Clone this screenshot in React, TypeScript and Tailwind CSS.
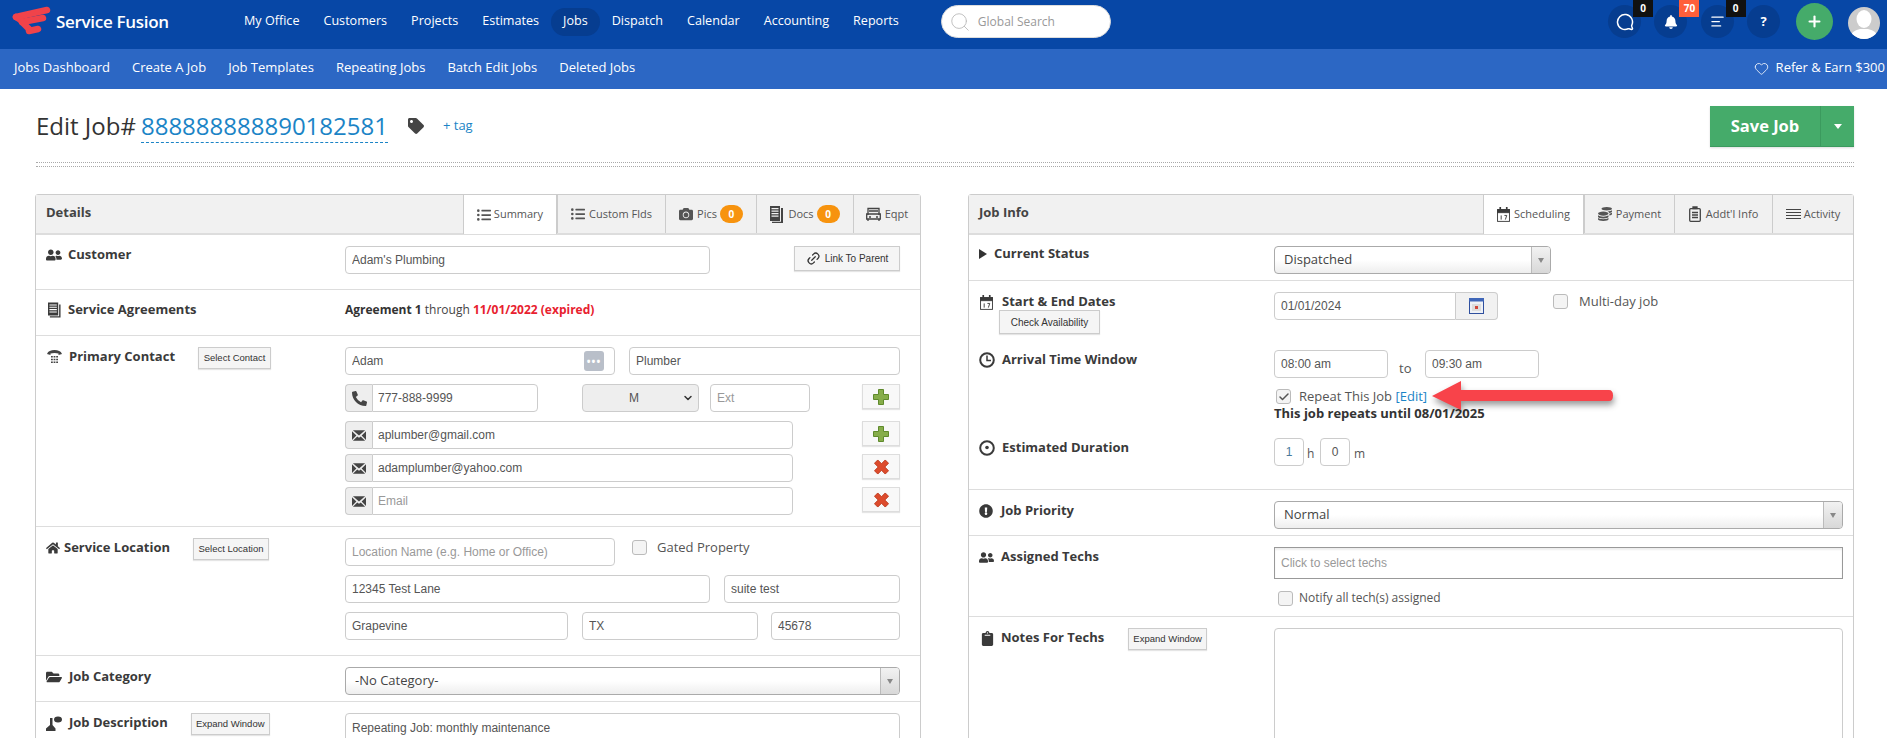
import React from 'react';
import { AlignLeft, Check, ChevronDown, Heart, Link2, MessageCircle, Plus, Search } from 'lucide-react';
import {
  FaBell,
  FaCamera,
  FaClipboard,
  FaCoins,
  FaExclamationCircle,
  FaFolderOpen,
  FaHome,
  FaListUl,
  FaPhoneAlt,
  FaTag,
  FaUserFriends,
} from 'react-icons/fa';

const navItems = ['My Office', 'Customers', 'Projects', 'Estimates', 'Jobs', 'Dispatch', 'Calendar', 'Accounting', 'Reports'];
const subNavItems = ['Jobs Dashboard', 'Create A Job', 'Job Templates', 'Repeating Jobs', 'Batch Edit Jobs', 'Deleted Jobs'];

const Logo = () => (
  <svg viewBox="0 0 40 32" className="w-[40px] h-[32px] shrink-0" fill="none" stroke="#f0434a" strokeWidth="6.5" strokeLinecap="round" strokeLinejoin="round">
    <path d="M4 11 L35 4" />
    <path d="M4 11 L12 16" />
    <path d="M10 16 L31 12" />
    <path d="M10 16 L18 24" />
    <path d="M17 25 L26 23" />
  </svg>
);

const EnvelopeIcon = () => (
  <svg viewBox="0 0 16 12" className="w-[14px] h-[11px]" fill="#444">
    <path d="M1 0h14l-7 6z" />
    <path d="M0 1v10l5-5zM16 1v10l-5-5z" />
    <path d="M1 12l5-5 2 1.6L10 7l5 5z" />
  </svg>
);

const AgreementIcon = () => (
  <svg viewBox="0 0 14 16" className="w-[13px] h-[16px]" fill="#3a3a3a">
    <path d="M0 0h11v14H0zM1.5 2v1.2h8V2zm0 2.5v1.2h8V4.5zm0 2.5v1.2h8V7zm0 2.5v1.2h8V9.5z" fillRule="evenodd" />
    <path d="M12 2h1.5v14H2v-1.3h10z" />
  </svg>
);

const TelIcon = () => (
  <svg viewBox="0 0 15 14" className="w-[15px] h-[14px]" fill="#444">
    <path d="M0 4C1 1 4 0 7.5 0S14 1 15 4l-3.5 1V3.5c-2-.8-6-.8-8 0V5z" />
    <path d="M4 6h1.8v1.6H4zm2.6 0h1.8v1.6H6.6zm2.6 0H11v1.6H9.2zM4 8.7h1.8v1.6H4zm2.6 0h1.8v1.6H6.6zm2.6 0H11v1.6H9.2zM4 11.4h1.8V13H4zm2.6 0h1.8V13H6.6zm2.6 0H11V13H9.2z" />
  </svg>
);

const SpeakerIcon = () => (
  <svg viewBox="0 0 16 15" className="w-[16px] h-[15px]" fill="#3a3a3a">
    <ellipse cx="12" cy="3.5" rx="4" ry="3" />
    <path d="M4 2h2.5v7l3 3.5V15H0v-2.5L4 9z" />
  </svg>
);

const CalendarIcon = ({ className }: { className: string }) => (
  <svg viewBox="0 0 14 16" className={className} fill="none" stroke="#3a3a3a">
    <rect x="0.6" y="2.6" width="12.8" height="12.8" />
    <path d="M.6 3h12.8v3H.6z" fill="#3a3a3a" />
    <path d="M3.5 0v3M10.5 0v3" strokeWidth="1.8" />
    <path d="M4.5 9v4.5M8 9h2.5L9 13.5" strokeWidth="1" />
  </svg>
);

const DocsIcon = () => (
  <svg viewBox="0 0 13 17" className="w-[13px] h-[17px]" fill="#444">
    <path d="M0 0h10v15H0zM1.5 2v1.2h7V2zm0 2.5v1.2h7V4.5zm0 2.5v1.2h7V7zm0 2.5v1.2h7V9.5z" fillRule="evenodd" />
    <path d="M11 2h2v15H2v-1.3h9z" />
  </svg>
);

const EqptIcon = () => (
  <svg viewBox="0 0 15 14" className="w-[15px] h-[14px]" fill="none" stroke="#444" strokeWidth="1.3">
    <path d="M2 8V1.5h11V8" />
    <path d="M.7 7h13.6v5H.7z" />
    <path d="M3 4h9M3 10h2M10 10h2M2 12v2M13 12v2" />
  </svg>
);

const ActivityIcon = () => (
  <svg viewBox="0 0 15 10" className="w-[15px] h-[10px]" stroke="#444" strokeWidth="1">
    <path d="M0 .5h15M0 3.5h15M0 6.5h15M0 9.5h15" />
  </svg>
);

const AddlInfoIcon = () => (
  <svg viewBox="0 0 12 16" className="w-[12px] h-[16px]" fill="none" stroke="#444" strokeWidth="1.3">
    <rect x="0.7" y="2.7" width="10.6" height="12.6" rx="1" />
    <path d="M4 2.5h4V1H4z" fill="#444" />
    <path d="M3 6.5h6M3 9h6M3 11.5h6" />
  </svg>
);

const ClockIcon = ({ dot }: { dot?: boolean }) => (
  <svg viewBox="0 0 16 16" className="w-[16px] h-[16px]" fill="none" stroke="#3a3a3a" strokeWidth="2">
    <circle cx="8" cy="8" r="6.8" />
    {dot ? <circle cx="8" cy="7.5" r="1.8" fill="#3a3a3a" stroke="none" /> : <path d="M8 3.5V8.5H12" strokeWidth="1.5" />}
  </svg>
);

const GreenPlus = () => (
  <svg viewBox="0 0 16 16" className="w-[16px] h-[16px]">
    <path d="M5.5 .5h5v5h5v5h-5v5h-5v-5h-5v-5h5z" fill="#86ad4a" stroke="#5f8a2c" strokeLinejoin="round" />
  </svg>
);

const RedCross = () => (
  <svg viewBox="0 0 16 16" className="w-[15px] h-[16px]">
    <path d="M4 .5 8 4.5 12 .5 15.5 4 11.5 8 15.5 12 12 15.5 8 11.5 4 15.5 .5 12 4.5 8 .5 4z" fill="#dd4b2c" stroke="#bd3a1e" strokeLinejoin="round" />
  </svg>
);

const Label = ({ icon, iconClass, children }: { icon: React.ReactNode; iconClass: string; children: React.ReactNode }) => (
  <div className="flex items-center h-[18px] mt-[1px] text-[13px] font-bold text-[#3a3a3a] whitespace-nowrap">
    <span className={`flex items-center shrink-0 ${iconClass}`}>{icon}</span>
    {children}
  </div>
);

const SmallButton = ({ className, children }: { className: string; children: React.ReactNode }) => (
  <div className={`flex items-center justify-center bg-[#f5f5f5] border border-[#ccc] shadow-[0_1px_1px_#e5e5e5] font-['Liberation_Sans',Arial,sans-serif] text-[#333] whitespace-nowrap ${className}`}>
    {children}
  </div>
);

const TextInput = ({ value, placeholder, className }: { value?: string; placeholder?: string; className: string }) => (
  <input
    readOnly
    value={value ?? ''}
    placeholder={placeholder}
    className={`block h-[28px] px-[6px] bg-white border border-[#ccc] rounded-[4px] font-['Liberation_Sans',Arial,sans-serif] text-[12px] text-[#555] placeholder:text-[#999] outline-none ${className}`}
  />
);

const AddonInput = ({ icon, value, placeholder, className }: { icon: React.ReactNode; value?: string; placeholder?: string; className: string }) => (
  <div className={`flex h-[28px] ${className}`}>
    <span className="flex items-center justify-center w-[27px] shrink-0 bg-[#eee] border border-r-0 border-[#ccc] rounded-l-[4px]">{icon}</span>
    <input
      readOnly
      value={value ?? ''}
      placeholder={placeholder}
      className="flex-1 min-w-0 px-[5px] bg-white border border-[#ccc] rounded-r-[4px] font-['Liberation_Sans',Arial,sans-serif] text-[12px] text-[#555] placeholder:text-[#999] outline-none"
    />
  </div>
);

const Dropdown = ({ value, className }: { value: string; className: string }) => (
  <div className={`flex h-[28px] border border-[#aaa] rounded-[4px] bg-gradient-to-b from-white from-50% to-[#eee] overflow-hidden ${className}`}>
    <span className="flex-1 flex items-center pl-[9px] text-[13px] text-[#444]">{value}</span>
    <span className="flex items-center justify-center w-[19px] border-l border-[#bbb] bg-gradient-to-b from-[#f2f2f2] to-[#d8d8d8]">
      <span className="w-0 h-0 border-x-[3px] border-x-transparent border-t-[5px] border-t-[#888]" />
    </span>
  </div>
);

const CheckBox = ({ checked, className }: { checked?: boolean; className?: string }) => (
  <span className={`flex items-center justify-center w-[15px] h-[15px] shrink-0 rounded-[3px] border border-[#bbb] bg-[#f4f4f4] ${className ?? ''}`}>
    {checked && <Check size={12} strokeWidth={3} color="#555" />}
  </span>
);

const CountBadge = ({ value }: { value: string }) => (
  <span className="ml-[3px] flex items-center justify-center w-[23px] h-[18px] rounded-full bg-[#f7930e] text-white text-[10px] font-bold">{value}</span>
);

const Tab = ({ active, className, children }: { active?: boolean; className: string; children: React.ReactNode }) => (
  <div className={`flex items-center justify-center border-l border-[#ccc] text-[11px] text-[#555] whitespace-nowrap ${active ? 'bg-white h-[39px] border-r' : 'h-[38px]'} ${className}`}>
    {children}
  </div>
);

const CornerButton = ({ children }: { children: React.ReactNode }) => (
  <div className="flex items-center justify-center w-[38px] h-[25px] bg-[#f8f8f8] border border-[#ddd] shadow-[0_1px_1px_#e5e5e5]">{children}</div>
);

const HeaderCircle = ({ badge, badgeClass, children }: { badge?: string; badgeClass?: string; children: React.ReactNode }) => (
  <div className="relative flex items-center justify-center w-[33px] h-[33px] rounded-full bg-[#063d90] text-white">
    {children}
    {badge && (
      <span className={`absolute left-[25px] top-[-5px] flex items-center justify-center w-[20px] h-[17px] text-[10px] font-bold text-white ${badgeClass}`}>{badge}</span>
    )}
  </div>
);

export default function App() {
  return (
    <div className="relative h-[738px] overflow-hidden bg-white font-['Open_Sans',sans-serif]">
      <header className="flex items-center h-[49px] pb-[6px] bg-[#0747a6] text-white">
        <div className="flex items-center pl-[12px] w-[232px]">
          <Logo />
          <span className="ml-[4px] text-[17px] font-semibold tracking-[-0.3px] whitespace-nowrap">Service Fusion</span>
        </div>
        <nav className="flex items-center">
          {navItems.map((item) => (
            <a key={item} className={`flex items-center h-[28px] px-[12px] text-[12.6px] whitespace-nowrap ${item === 'Jobs' ? 'bg-[#063d90] rounded-full' : ''}`}>
              {item}
            </a>
          ))}
        </nav>
        <div className="ml-[30px] flex items-center w-[170px] h-[33px] bg-white rounded-full border border-[#ddd] pl-[7px]">
          <Search size={22} strokeWidth={1} color="#bbb" className="shrink-0" />
          <span className="ml-[7px] text-[12px] text-[#999]">Global Search</span>
        </div>
        <div className="ml-auto flex items-center pr-[7px]">
          <div className="flex items-center gap-[13.3px]">
            <HeaderCircle badge="0" badgeClass="bg-[#111]">
              <MessageCircle size={18} className="-scale-x-100" />
            </HeaderCircle>
            <HeaderCircle badge="70" badgeClass="bg-[#ff5f3a]">
              <FaBell size={14} />
            </HeaderCircle>
            <HeaderCircle badge="0" badgeClass="bg-[#111]">
              <AlignLeft size={15} />
            </HeaderCircle>
            <HeaderCircle>
              <span className="text-[13px] font-bold">?</span>
            </HeaderCircle>
          </div>
          <div className="ml-[16px] flex items-center justify-center w-[37px] h-[37px] rounded-full bg-[#45ab6a]">
            <Plus size={17} strokeWidth={3} color="white" />
          </div>
          <div className="ml-[15px] mt-[3px] w-[32px] h-[32px] rounded-full bg-[#ccc] overflow-hidden">
            <svg viewBox="0 0 32 32" className="w-full h-full" fill="white">
              <ellipse cx="16" cy="12" rx="7.5" ry="9" />
              <path d="M2 32c0-7 6-9 10-10h8c4 1 10 3 10 10z" />
            </svg>
          </div>
        </div>
      </header>

      <div className="flex items-center h-[40px] pb-[2px] pl-[14px] pr-[2px] bg-[#2c67c4] text-white text-[13px]">
        <div className="flex items-center gap-[22px]">
          {subNavItems.map((item) => (
            <a key={item} className="whitespace-nowrap">{item}</a>
          ))}
        </div>
        <div className="ml-auto flex items-center gap-[7px] whitespace-nowrap">
          <Heart size={15} strokeWidth={1.3} />
          Refer &amp; Earn $300
        </div>
      </div>

      <div className="px-[36px] mr-[-3px]">
        <div className="flex items-center h-[41px] mt-[17px]">
          <h1 className="-mt-[2px] text-[24px] font-normal text-[#333] whitespace-nowrap">Edit Job#</h1>
          <span className="ml-[5px] text-[24px] text-[#1b84c6] border-b border-dashed border-[#1b84c6] leading-[32px] whitespace-nowrap">888888888890182581</span>
          <FaTag size={16} color="#444" className="ml-[20px] -mt-[2px]" />
          <a className="ml-[19px] -mt-[2px] text-[13px] text-[#1b84c6]">+ tag</a>
          <div className="ml-auto flex h-[41px] bg-[#45ab6a] text-white border-b border-[#3b9a5e] shadow-[0_1px_2px_#ddd]">
            <span className="flex items-center justify-center w-[110px] text-[16.5px] font-bold">Save Job</span>
            <span className="flex items-center justify-center w-[34px] border-l border-[#3b9a5e]">
              <span className="w-0 h-0 border-x-[4px] border-x-transparent border-t-[5px] border-t-white" />
            </span>
          </div>
        </div>
        <div className="h-[5px] mt-[15px] border-y border-dotted border-[#aaa]" />
      </div>

      <div className="flex mt-[27px] pl-[35px]">
        {/* left panel */}
        <section className="w-[886px] h-[600px] shrink-0 border border-[#ccc] rounded-t-[3px]">
          <div className="flex items-start h-[40px] bg-[#f1f1f1] border-b-2 border-[#ddd]">
            <span className="pl-[10px] h-[36px] flex items-center text-[13px] font-bold text-[#444]">Details</span>
            <div className="ml-auto flex">
              <Tab active className="w-[94px]"><FaListUl size={14} className="mr-[3px]" />Summary</Tab>
              <Tab className="w-[108px]"><FaListUl size={14} className="mr-[4px]" />Custom Flds</Tab>
              <Tab className="w-[91px]"><FaCamera size={14} className="mr-[4px]" />Pics<CountBadge value="0" /></Tab>
              <Tab className="w-[97px]"><span className="mr-[5px]"><DocsIcon /></span>Docs<CountBadge value="0" /></Tab>
              <Tab className="w-[67px]"><span className="mr-[4px]"><EqptIcon /></span>Eqpt</Tab>
            </div>
          </div>

          <div className="flex h-[55px] pt-[11px] border-b border-[#ddd]">
            <div className="w-[309px] pl-[10px] -mt-[1px]">
              <Label icon={<FaUserFriends size={16} color="#3a3a3a" />} iconClass="w-[22px]">Customer</Label>
            </div>
            <TextInput value="Adam's Plumbing" className="w-[365px]" />
            <SmallButton className="ml-[84px] w-[106px] h-[25px] text-[10px]">
              <Link2 size={15} className="mr-[4px] -rotate-45" />
              Link To Parent
            </SmallButton>
          </div>

          <div className="flex h-[46px] pt-[11px] border-b border-[#ddd]">
            <div className="w-[309px] pl-[12px] -mt-[1px]">
              <Label icon={<AgreementIcon />} iconClass="w-[20px]">Service Agreements</Label>
            </div>
            <p className="text-[12px] leading-[18px] text-[#444]">
              <b className="text-[#333]">Agreement 1</b> through <b className="text-[#e8212f]">11/01/2022 (expired)</b>
            </p>
          </div>

          <div className="flex h-[191px] pt-[11px] border-b border-[#ddd]">
            <div className="flex items-start w-[309px] pl-[11px]">
              <Label icon={<TelIcon />} iconClass="w-[22px]">Primary Contact</Label>
              <SmallButton className="ml-[23px] w-[73px] h-[22px] text-[9.5px]">Select Contact</SmallButton>
            </div>
            <div className="flex flex-col w-[555px]">
              <div className="flex gap-[14px]">
                <div className="relative w-[270px]">
                  <TextInput value="Adam" className="w-full" />
                  <span className="absolute right-[11px] top-[4px] flex items-center justify-center w-[20px] h-[20px] rounded-[3px] bg-[#b9bfc9] text-white text-[10px] font-bold tracking-[1px]">•••</span>
                </div>
                <TextInput value="Plumber" className="w-[271px]" />
              </div>
              <div className="flex mt-[9px]">
                <AddonInput icon={<FaPhoneAlt size={15} color="#444" />} value="777-888-9999" className="w-[193px]" />
                <div className="ml-[44px] flex items-center w-[117px] h-[28px] bg-[#eee] border border-[#ccc] rounded-[4px] font-['Liberation_Sans',Arial,sans-serif] text-[12px] text-[#555]">
                  <span className="flex-1 text-center pl-[3px]">M</span>
                  <ChevronDown size={12} strokeWidth={3} color="#333" className="mr-[4px]" />
                </div>
                <TextInput placeholder="Ext" className="ml-[11px] w-[100px]" />
                <div className="ml-[52px]"><CornerButton><GreenPlus /></CornerButton></div>
              </div>
              <div className="flex mt-[9px]">
                <AddonInput icon={<EnvelopeIcon />} value="aplumber@gmail.com" className="w-[448px]" />
                <div className="ml-[69px]"><CornerButton><GreenPlus /></CornerButton></div>
              </div>
              <div className="flex mt-[5px]">
                <AddonInput icon={<EnvelopeIcon />} value="adamplumber@yahoo.com" className="w-[448px]" />
                <div className="ml-[69px]"><CornerButton><RedCross /></CornerButton></div>
              </div>
              <div className="flex mt-[5px]">
                <AddonInput icon={<EnvelopeIcon />} placeholder="Email" className="w-[448px]" />
                <div className="ml-[69px]"><CornerButton><RedCross /></CornerButton></div>
              </div>
            </div>
          </div>

          <div className="flex h-[129px] pt-[11px] border-b border-[#ddd]">
            <div className="flex items-start w-[309px] pl-[10px]">
              <Label icon={<FaHome size={14} color="#3a3a3a" />} iconClass="w-[18px]">Service Location</Label>
              <SmallButton className="ml-[23px] w-[76px] h-[22px] text-[9.5px]">Select Location</SmallButton>
            </div>
            <div className="flex flex-col w-[555px] gap-[9px]">
              <div className="flex items-start">
                <TextInput placeholder="Location Name (e.g. Home or Office)" className="w-[270px]" />
                <CheckBox className="ml-[17px] mt-[2px]" />
                <span className="ml-[10px] text-[13px] leading-[18px] text-[#555]">Gated Property</span>
              </div>
              <div className="flex gap-[14px]">
                <TextInput value="12345 Test Lane" className="w-[365px]" />
                <TextInput value="suite test" className="w-[176px]" />
              </div>
              <div className="flex">
                <TextInput value="Grapevine" className="w-[223px]" />
                <TextInput value="TX" className="ml-[14px] w-[176px]" />
                <TextInput value="45678" className="ml-[13px] w-[129px]" />
              </div>
            </div>
          </div>

          <div className="flex h-[46px] pt-[11px] border-b border-[#ddd]">
            <div className="w-[309px] pl-[10px]">
              <Label icon={<FaFolderOpen size={16} color="#3a3a3a" />} iconClass="w-[23px]">Job Category</Label>
            </div>
            <Dropdown value="-No Category-" className="w-[555px]" />
          </div>

          <div className="flex pt-[11px]">
            <div className="flex items-start w-[309px] pl-[10px]">
              <Label icon={<SpeakerIcon />} iconClass="w-[23px]">Job Description</Label>
              <SmallButton className="ml-[23px] w-[79px] h-[22px] text-[9.5px]">Expand Window</SmallButton>
            </div>
            <textarea
              readOnly
              value="Repeating Job: monthly maintenance"
              className="block w-[555px] h-[120px] px-[6px] py-[5px] border border-[#ccc] rounded-[4px] font-['Liberation_Sans',Arial,sans-serif] text-[12px] text-[#555] outline-none resize-none"
            />
          </div>
        </section>

        {/* right panel */}
        <section className="ml-[47px] w-[886px] h-[600px] shrink-0 border border-[#ccc] rounded-t-[3px]">
          <div className="flex items-start h-[40px] bg-[#f1f1f1] border-b-2 border-[#ddd]">
            <span className="pl-[10px] h-[36px] flex items-center text-[13px] font-bold text-[#444]">Job Info</span>
            <div className="ml-auto flex">
              <Tab active className="w-[101px]"><span className="mr-[4px]"><CalendarIcon className="w-[13px] h-[15px]" /></span>Scheduling</Tab>
              <Tab className="w-[90px]"><FaCoins size={14} className="mr-[4px]" />Payment</Tab>
              <Tab className="w-[98px]"><span className="mr-[5px]"><AddlInfoIcon /></span>Addt'l Info</Tab>
              <Tab className="w-[81px]"><span className="mr-[3px]"><ActivityIcon /></span>Activity</Tab>
            </div>
          </div>

          <div className="flex h-[46px] pt-[11px] border-b border-[#ddd]">
            <div className="w-[305px] pl-[10px] -mt-[2px]">
              <Label icon={<span className="w-0 h-0 border-y-[5px] border-y-transparent border-l-[8px] border-l-[#333]" />} iconClass="w-[15px]">Current Status</Label>
            </div>
            <Dropdown value="Dispatched" className="w-[277px]" />
          </div>

          <div className="h-[209px] pt-[11px] border-b border-[#ddd]">
            <div className="flex h-[58px]">
              <div className="w-[305px] pl-[11px]">
                <Label icon={<CalendarIcon className="w-[13px] h-[15px]" />} iconClass="w-[22px]">Start &amp; End Dates</Label>
                <SmallButton className="ml-[19px] w-[101px] h-[24px] -mt-[1px] text-[10px]">Check Availability</SmallButton>
              </div>
              <div className="flex items-start">
                <div className="flex w-[224px] h-[28px]">
                  <input readOnly value="01/01/2024" className="flex-1 min-w-0 px-[6px] border border-[#ccc] rounded-l-[4px] font-['Liberation_Sans',Arial,sans-serif] text-[12px] text-[#555] outline-none" />
                  <span className="flex items-center justify-center w-[42px] bg-[#f1f1f1] border border-l-0 border-[#ccc] rounded-r-[4px]">
                    <svg viewBox="0 0 15 16" className="w-[15px] h-[16px]">
                      <rect x="0.5" y="0.5" width="14" height="15" fill="#eef1f6" stroke="#2f4f9e" />
                      <rect x="0" y="0" width="15" height="3.5" fill="#3f66b8" />
                      <path d="M3 6h9v7H3z" fill="#ddd" />
                      <rect x="6" y="8" width="3" height="3" fill="#d0483c" />
                    </svg>
                  </span>
                </div>
                <CheckBox className="ml-[55px] mt-[2px]" />
                <span className="ml-[11px] text-[13px] leading-[18px] text-[#555]">Multi-day job</span>
              </div>
            </div>

            <div className="flex h-[88px]">
              <div className="w-[305px] pl-[10px]">
                <Label icon={<ClockIcon />} iconClass="w-[23px]">Arrival Time Window</Label>
              </div>
              <div>
                <div className="flex items-start">
                  <TextInput value="08:00 am" className="w-[114px]" />
                  <span className="ml-[11px] mt-[9px] w-[26px] text-[13px] leading-[18px] text-[#555]">to</span>
                  <TextInput value="09:30 am" className="w-[114px]" />
                </div>
                <div className="flex items-center mt-[11px] pl-[2px] h-[15px] text-[13px] text-[#555] whitespace-nowrap">
                  <CheckBox checked />
                  <span className="ml-[8px]">Repeat This Job <a className="text-[#1b84c6]">[Edit]</a></span>
                </div>
                <p className="text-[13px] leading-[18px] font-bold text-[#333] whitespace-nowrap">This job repeats until 08/01/2025</p>
              </div>
            </div>

            <div className="flex h-[28px]">
              <div className="w-[305px] pl-[10px]">
                <Label icon={<ClockIcon dot />} iconClass="w-[23px]">Estimated Duration</Label>
              </div>
              <div className="flex items-start text-[12px] text-[#555]">
                <input readOnly value="1" className="w-[30px] h-[28px] text-center border border-[#ccc] rounded-[4px] font-['Liberation_Sans',Arial,sans-serif] text-[12px] text-[#4a7a9c] outline-none" />
                <span className="ml-[3px] w-[13px] mt-[7px] leading-[18px]">h</span>
                <input readOnly value="0" className="w-[30px] h-[28px] text-center border border-[#ccc] rounded-[4px] font-['Liberation_Sans',Arial,sans-serif] text-[12px] text-[#555] outline-none" />
                <span className="ml-[4px] mt-[7px] leading-[18px]">m</span>
              </div>
            </div>
          </div>

          <div className="flex h-[46px] pt-[11px] border-b border-[#ddd]">
            <div className="w-[305px] pl-[10px]">
              <Label icon={<FaExclamationCircle size={14} color="#3a3a3a" />} iconClass="w-[22px]">Job Priority</Label>
            </div>
            <Dropdown value="Normal" className="w-[569px]" />
          </div>

          <div className="flex h-[81px] pt-[11px] border-b border-[#ddd]">
            <div className="w-[305px] pl-[10px]">
              <Label icon={<FaUserFriends size={15} color="#3a3a3a" />} iconClass="w-[22px]">Assigned Techs</Label>
            </div>
            <div>
              <div className="flex items-center w-[569px] h-[32px] pl-[6px] border border-[#999] shadow-[inset_0_2px_2px_#eee] font-['Liberation_Sans',Arial,sans-serif] text-[12px] text-[#999]">Click to select techs</div>
              <div className="flex items-center mt-[10px] pl-[4px] text-[12px] text-[#555]">
                <CheckBox />
                <span className="ml-[6px]">Notify all tech(s) assigned</span>
              </div>
            </div>
          </div>

          <div className="flex pt-[11px]">
            <div className="flex items-start w-[305px] pl-[11px]">
              <Label icon={<FaClipboard size={15} color="#3a3a3a" />} iconClass="w-[21px]">Notes For Techs</Label>
              <SmallButton className="ml-[24px] w-[79px] h-[22px] text-[9.5px]">Expand Window</SmallButton>
            </div>
            <div className="w-[569px] h-[130px] border border-[#ccc] rounded-[4px]" />
          </div>
        </section>
      </div>

      {/* annotation arrow on top of the form */}
      <svg viewBox="0 0 200 56" className="absolute left-[1425px] top-[372px] w-[200px] h-[56px] drop-shadow-[1px_4px_3px_rgba(0,0,0,0.4)]">
        <path d="M7 24 L36 9 L36 18 L184 18 Q188 18 188 23.5 Q188 29 184 29 L36 29 L36 38 Z" fill="#f8434a" />
      </svg>
    </div>
  );
}
